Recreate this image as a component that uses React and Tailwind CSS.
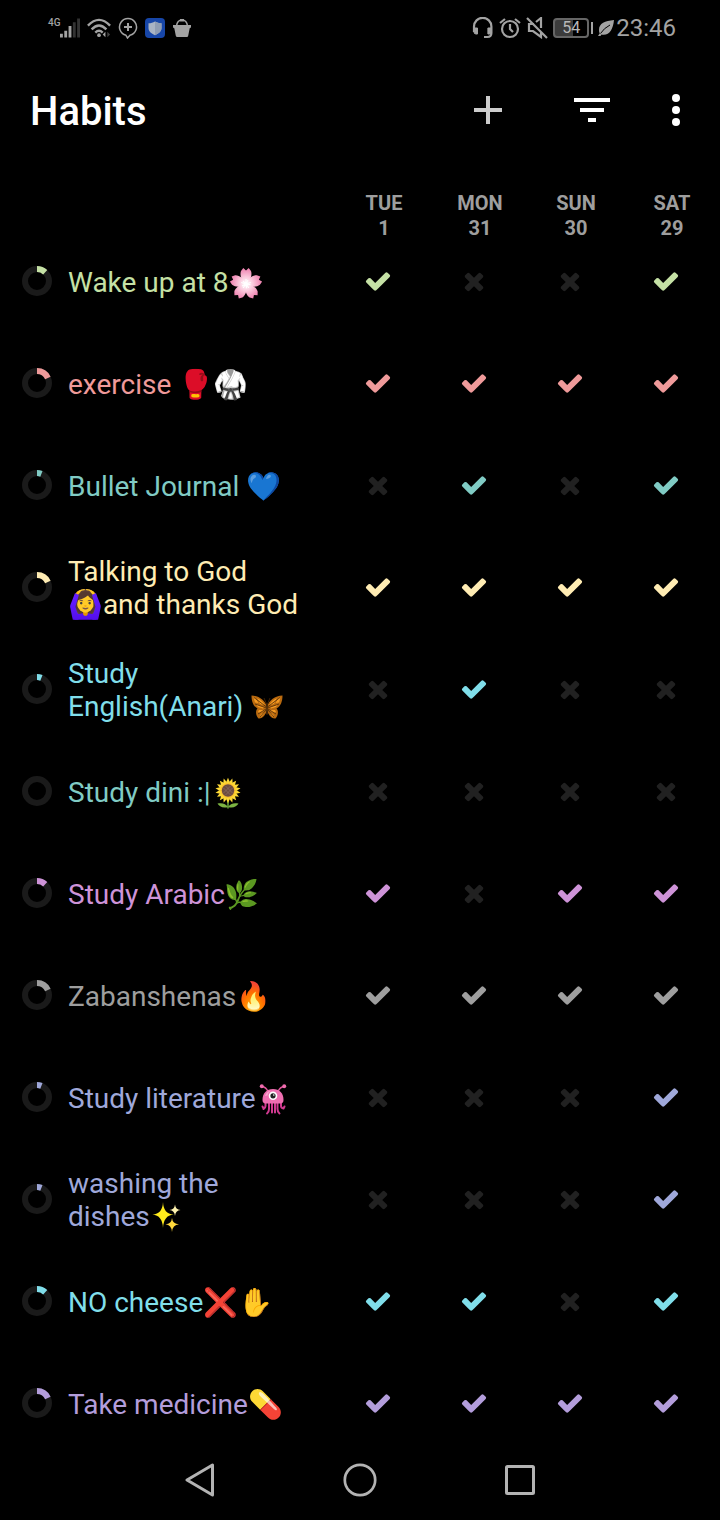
import { Fragment } from "react";

const DAYS = [
  { name: "TUE", date: "1" },
  { name: "MON", date: "31" },
  { name: "SUN", date: "30" },
  { name: "SAT", date: "29" },
];

const HABITS = [
  { parts: ["Wake up at 8", "🌸"], color: "text-[#c5e1a5]", score: 12, marks: [1, 0, 0, 1] },
  { parts: ["exercise ", "🥊🥋"], color: "text-[#ef9a9a]", score: 18, marks: [1, 1, 1, 1] },
  { parts: ["Bullet Journal ", "💙"], color: "text-[#80cbc4]", score: 6, marks: [0, 1, 0, 1] },
  { parts: ["Talking to God ", "🙆‍♀️", "and thanks God"], color: "text-[#ffecb3]", score: 18, marks: [1, 1, 1, 1] },
  { parts: ["Study English(Anari) ", "🦋"], color: "text-[#80deea]", score: 6, marks: [0, 1, 0, 0] },
  { parts: ["Study dini :|", "🌻"], color: "text-[#80cbc4]", score: 0, marks: [0, 0, 0, 0] },
  { parts: ["Study Arabic", "🌿"], color: "text-[#ce93d8]", score: 12, marks: [1, 0, 1, 1] },
  { parts: ["Zabanshenas", "🔥"], color: "text-[#9e9e9e]", score: 18, marks: [1, 1, 1, 1] },
  { parts: ["Study literature", "👾"], color: "text-[#9fa8da]", score: 6, marks: [0, 0, 0, 1] },
  { parts: ["washing the dishes", "✨"], color: "text-[#9fa8da]", score: 6, marks: [0, 0, 0, 1] },
  { parts: ["NO cheese", "❌✋"], color: "text-[#80deea]", score: 12, marks: [1, 1, 0, 1] },
  { parts: ["Take medicine", "💊"], color: "text-[#b39ddb]", score: 18, marks: [1, 1, 1, 1] },
];

const FIVE = [0, 72, 144, 216, 288];
const EIGHTEEN = Array.from({ length: 18 }, (_, i) => i * 20);

function Blossom() {
  return (
    <>
      <defs>
        <radialGradient id="petal" gradientUnits="userSpaceOnUse" cx="16" cy="17" r="16">
          <stop offset="0" stopColor="#fff" />
          <stop offset="0.450" stopColor="#fbc8dc" />
          <stop offset="1" stopColor="#ee7fae" />
        </radialGradient>
      </defs>
      {FIVE.map((a) => (
        <path key={a} transform={`rotate(${a} 16 17)`} fill="url(#petal)" d="M16 17C11.500 14 9.500 8 11 4L13.300 1 16 3.500 18.700 1 21 4C22.500 8 20.500 14 16 17z" />
      ))}
      {FIVE.map((a) => (
        <path key={a} transform={`rotate(${a} 16 17)`} stroke="#fff" strokeWidth="1" d="M16 17V12M16 17l2-4" />
      ))}
      <circle cx="16" cy="17" r="2" fill="#fff" />
    </>
  );
}

function Butterfly() {
  const wing = (
    <>
      <path fill="#b8690f" d="M16 16C18 9 24 5 31.500 4.500 31.500 10 30 15 25.500 17.500 28 20 27 25 24.500 27.500 20 28 17 23 16 19z" />
      <path fill="#f59a22" d="M18 14.500C20 10.500 23 8 26 7.200L23 13zM24.500 12l3-5 2-.5-1.500 5zM19 16l5-1.500 3-1.500-2 3-5 1.500zM18 19l6 0 1 2-2 1zM18 21l4 2 1.500 3-2-.5z" />
      <path stroke="#4a2a0a" strokeWidth="0.800" fill="none" d="M16.500 16L29 6.500M16.500 17L28 13M17 18l8 5M17 19l6 7" />
    </>
  );
  return (
    <>
      {wing}
      <g transform="translate(32 0) scale(-1 1)">{wing}</g>
      <path stroke="#4a2a0a" strokeWidth="1.600" strokeLinecap="round" d="M16 13v10" />
      <path stroke="#4a2a0a" strokeWidth="0.800" fill="none" d="M15.500 13L13 7M16.500 13L19 7" />
    </>
  );
}

function Sunflower() {
  return (
    <>
      <path stroke="#558b2f" strokeWidth="1.800" d="M16 22v9.500" />
      <path fill="#7cb342" d="M16 30C11 31.500 7 29.500 5.500 26.500 10 25.500 14 26.500 16 30zM16 30C21 31.500 25 29.500 26.500 26.500 22 25.500 18 26.500 16 30z" />
      {EIGHTEEN.map((a) => (
        <path key={a} transform={`rotate(${a} 16 13.500)`} fill="#fdd835" d="M16 13.500L14.200 5 16 .8 17.800 5z" />
      ))}
      <circle cx="16" cy="13.500" r="7.500" fill="#fbc02d" />
      <circle cx="16" cy="13.500" r="6.200" fill="#6d4c41" />
      <path stroke="#8d6e63" strokeWidth="0.700" d="M11.500 11l7 7M13.500 9l7 7M11.500 16l7-7M13.500 18l7-7" />
    </>
  );
}

function Alien() {
  return (
    <>
      <path stroke="#e0569c" strokeWidth="1.300" fill="none" d="M5 3.500Q9 4 11 8.500M27 3.500Q23 4 21 8.500" />
      <circle cx="4.800" cy="3.300" r="2" fill="#f06cae" />
      <circle cx="27.200" cy="3.300" r="2" fill="#f06cae" />
      <path stroke="#d03a90" strokeWidth="2" strokeLinecap="round" fill="none" d="M8.500 18v5q0 2-2 3M12 19v7q0 3-2 4.500M15 19v10.500M18 19v10.500M20.500 19v7q0 3 2 4.500M24 18v5q0 2 2.500 2.500M6.500 25.500l-1-2M26.500 25.500l1-2" />
      <path fill="#ef6fb1" d="M5.500 17C5.500 10 9.500 6 16 6s10.500 4 10.500 11c0 2-1 3.500-3 3.500h-15c-2 0-3-1.500-3-3.500z" />
      <path fill="#f7a3ce" d="M8 13c1-3 3-5 6-5.500-2 1.500-3 3-3.500 5z" />
      <circle cx="16" cy="12.800" r="4.300" fill="#fff" />
      <circle cx="16" cy="12.800" r="2.600" fill="#222" />
      <circle cx="16.800" cy="12" r="0.800" fill="#fff" />
    </>
  );
}

function Sparkles() {
  return (
    <>
      <path fill="#ffeb1c" d="M12 1Q12.500 13 22.500 13.500 12.500 14.500 12 27 11.500 14.500 1.500 13.500 11.500 13 12 1z" />
      <path fill="#fff3b0" d="M24 3.500Q24.500 8.500 29.500 9 24.500 9.500 24 15 23.500 9.500 18.500 9 23.500 8.500 24 3.500z" />
      <path fill="#ffd83c" d="M21 17Q21.500 22.800 28 23.300 21.500 23.800 21 31 20.500 23.800 14.500 23.300 20.500 22.800 21 17z" />
    </>
  );
}

const DRAWN = { "🌸": Blossom, "🦋": Butterfly, "🌻": Sunflower, "👾": Alien, "✨": Sparkles };

function LabelPart({ text }) {
  const Picture = DRAWN[text];
  if (!Picture) return <Fragment>{text}</Fragment>;
  return (
    <svg viewBox="0 0 32 32" role="img" aria-label={text} className="mx-px inline-block size-8 align-[-7px]" fill="none">
      <Picture />
    </svg>
  );
}

function Check() {
  return (
    <svg viewBox="0 0 1792 1792" className="size-7" fill="currentColor" aria-hidden="true">
      <path d="M1671 566q0 40-28 68l-724 724-136 136q-28 28-68 28t-68-28l-136-136-362-362q-28-28-28-68t28-68l136-136q28-28 68-28t68 28l294 295 656-657q28-28 68-28t68 28l136 136q28 28 28 68z" />
    </svg>
  );
}

function Cross() {
  return (
    <svg viewBox="0 0 1792 1792" className="size-7 text-[#212121]" fill="currentColor" aria-hidden="true">
      <path d="M1490 1322q0 40-28 68l-136 136q-28 28-68 28t-68-28l-294-294-294 294q-28 28-68 28t-68-28l-136-136q-28-28-28-68t28-68l294-294-294-294q-28-28-28-68t28-68l136-136q28-28 68-28t68 28l294 294 294-294q28-28 68-28t68 28l136 136q28 28 28 68t-28 68l-294 294 294 294q28 28 28 68z" />
    </svg>
  );
}

function Ring({ score }) {
  return (
    <svg viewBox="0 0 30 30" className="size-[30px] shrink-0" fill="none" strokeWidth="6" aria-hidden="true">
      <circle cx="15" cy="15" r="12" stroke="#1a1a1a" />
      {score > 0 && (
        <circle cx="15" cy="15" r="12" stroke="currentColor" pathLength="100" strokeDasharray={`${score} 100`} transform="rotate(-90 15 15)" />
      )}
    </svg>
  );
}

function StatusBar() {
  return (
    <div className="flex h-14 items-center justify-between pl-12 pr-11 text-[#a3a3a3]">
      <div className="flex items-center gap-[7px]">
        <div className="flex items-start">
          <span className="w-3 text-[10px] font-medium leading-3">4G</span>
          <svg viewBox="0 0 21 22" className="h-[22px] w-5" fill="currentColor">
            <path d="M0 17h3v4H0zM4.500 14h3v7h-3zM9 9h3v12H9z" />
            <path d="M13.500 5h3v16h-3zM18 1h3v20h-3z" fill="#333" />
          </svg>
        </div>
        <svg viewBox="0 0 26 22" className="h-[22px] w-6" fill="none" stroke="currentColor" strokeWidth="2.600">
          <path d="M1 8.500Q13-4 25 8.500M5 12.500q8-8.400 16 0M9 16q4-4 8 0" />
          <circle cx="13" cy="18.800" r="2" fill="currentColor" stroke="none" />
          <path d="M20 15v6l-3-3z" fill="currentColor" stroke="none" />
          <path d="M22 15v6l3-3z" fill="#444" stroke="none" />
        </svg>
        <svg viewBox="0 0 20 22" className="h-[22px] w-5" fill="none" stroke="currentColor" strokeWidth="1.500">
          <path d="M8 18.300A8.500 8.500 0 1 1 12 18.300L9.500 21z" />
          <path d="M10 6v8M6 10h8" strokeWidth="2" />
        </svg>
        <svg viewBox="0 0 20 20" className="size-5">
          <rect width="20" height="20" rx="4" fill="#1746a8" />
          <path d="M10 3.500c2 1.300 4 1.700 6.500 1.800v4.700c0 3.300-2.600 5.600-6.500 7.200-3.900-1.600-6.500-3.900-6.500-7.200V5.300C6 5.200 8 4.800 10 3.500z" fill="#a9b4c4" />
          <path d="M10 3.500c2 1.300 4 1.700 6.500 1.800v4.700c0 3.300-2.600 5.600-6.500 7.200z" fill="#8f9db3" />
        </svg>
        <svg viewBox="0 0 20 20" className="size-5" fill="none">
          <path d="M4.500 8C5 4 7.500 2 10 2s5 2 5.500 6" stroke="currentColor" strokeWidth="1.500" />
          <path d="M8 1h4v2.500H8z" fill="currentColor" />
          <path d="M1 7h18v1.500c0 1-.5 1.500-1.300 1.700l-1.500 7.600c-.2.800-.7 1.200-1.500 1.200H5.300c-.8 0-1.300-.4-1.500-1.200l-1.500-7.600C1.500 10 1 9.500 1 8.500z" fill="currentColor" />
        </svg>
      </div>
      <div className="flex items-center gap-[5px]">
        <svg viewBox="0 0 22 22" className="size-[22px]" fill="none" stroke="currentColor" strokeWidth="2.200">
          <path d="M2 15V9.500a8.700 8.700 0 0 1 17.400 0V16q0 4-4 4H12" />
          <path d="M2 11h3.500v6H4a2 2 0 0 1-2-2zM19.400 11h-3.500v6h1.500a2 2 0 0 0 2-2z" fill="currentColor" strokeWidth="1" />
        </svg>
        <svg viewBox="0 0 22 22" className="size-[22px]" fill="none" stroke="currentColor" strokeWidth="2.200">
          <circle cx="11" cy="12" r="8" />
          <path d="M11 7v5l3 3M1 6l5-4M21 6l-5-4" />
        </svg>
        <svg viewBox="0 0 22 22" className="size-[22px]" fill="none" stroke="currentColor" strokeWidth="2.200">
          <path d="M8 7H3v7h4l8 6v-5M10 5l5-4v10M1 1l20 20" />
        </svg>
        <div className="flex items-center gap-0.5">
          <div className="flex h-5 w-9 items-center justify-center rounded-sm border-2 border-[#666] bg-linear-to-r from-[#3c3c3c] from-55% to-black to-55% text-base text-[#b8b8b8]">54</div>
          <div className="h-3 w-0.5 bg-[#a3a3a3]" />
        </div>
        <div className="flex items-center gap-0.5">
          <svg viewBox="0 0 16 16" className="size-4">
            <path d="M16 0C7 1 1 3 1 10c0 1.500.3 2.500.8 3.300L0 16h2.500l1-1.500C11 16 15 10 16 0z" fill="currentColor" />
            <path d="M2.500 13.500Q6 8 12 5" stroke="#000" fill="none" />
          </svg>
          <time className="text-2xl leading-7">23:46</time>
        </div>
      </div>
    </div>
  );
}

function Toolbar() {
  return (
    <header className="flex h-[108px] items-center pl-[30px] pr-3">
      <h1 className="grow pt-1 text-[40px] font-medium leading-[48px] text-white">Habits</h1>
      <button type="button" aria-label="Add habit" className="flex h-14 w-[104px] items-center justify-center">
        <svg viewBox="0 0 28 28" className="size-7" stroke="#ccc" strokeWidth="4"><path d="M14 0v28M0 14h28" /></svg>
      </button>
      <button type="button" aria-label="Filter" className="flex h-14 w-[104px] items-center justify-center">
        <svg viewBox="0 0 36 24" className="h-6 w-9" fill="#fff"><path d="M0 0h36v4H0zM6 10h24v4H6zM14 20h8v4h-8z" /></svg>
      </button>
      <button type="button" aria-label="More options" className="flex h-14 w-16 items-center justify-center">
        <svg viewBox="0 0 8 32" className="h-8 w-2" fill="#fff">
          <circle cx="4" cy="4" r="4" /><circle cx="4" cy="16" r="4" /><circle cx="4" cy="28" r="4" />
        </svg>
      </button>
    </header>
  );
}

function HabitRow({ habit }) {
  return (
    <tr className={`group ${habit.color}`}>
      <th scope="row" className="pt-[7px] pb-[29px] text-left font-normal group-last:pb-0">
        <div className="flex h-[66px] items-center gap-4 pl-[22px] pr-[30px]">
          <Ring score={habit.score} />
          <span className="min-w-0 pt-0.5 text-[28px] leading-[33px]">
            {habit.parts.map((p) => (
              <LabelPart key={p} text={p} />
            ))}
          </span>
        </div>
      </th>
      {habit.marks.map((done, i) => (
        <td key={DAYS[i].name} className="pt-[7px] pb-[29px] group-last:pb-0">
          <button type="button" aria-label={`${DAYS[i].name} ${DAYS[i].date}: ${done ? "done" : "not done"}`} className="flex h-[66px] w-full items-center justify-center">
            {done ? <Check /> : <Cross />}
          </button>
        </td>
      ))}
    </tr>
  );
}

export default function App() {
  return (
    <div className="flex min-h-screen flex-col bg-black font-['Roboto','Noto_Color_Emoji',sans-serif]">
      <StatusBar />
      <Toolbar />
      <main className="grow pr-1.5 pt-[27px]">
        <table className="w-full table-fixed border-collapse">
          <thead>
            <tr className="text-xl leading-[25px] text-[#9e9e9e]">
              <td />
              {DAYS.map((d) => (
                <th key={d.name} scope="col" className="w-24 pl-3 text-center font-bold">
                  {d.name}
                  <br />
                  {d.date}
                </th>
              ))}
            </tr>
          </thead>
          <tbody>
            {HABITS.map((h) => (
              <HabitRow key={h.parts[0]} habit={h} />
            ))}
          </tbody>
        </table>
      </main>
      <nav className="flex h-20 items-center justify-center text-[#b3b3b3]">
        <button type="button" aria-label="Back" className="flex h-14 w-40 items-center justify-center">
          <svg viewBox="0 0 34 34" className="size-[34px]" fill="none" stroke="currentColor" strokeWidth="3" strokeLinejoin="round"><path d="M4 17L29.500 2v30z" /></svg>
        </button>
        <button type="button" aria-label="Home" className="flex h-14 w-40 items-center justify-center">
          <svg viewBox="0 0 34 34" className="size-[34px]" fill="none" stroke="currentColor" strokeWidth="2.700"><circle cx="17" cy="17" r="15.200" /></svg>
        </button>
        <button type="button" aria-label="Recent apps" className="flex h-14 w-40 items-center justify-center">
          <svg viewBox="0 0 34 34" className="size-[34px]" fill="none" stroke="currentColor" strokeWidth="3"><rect x="3.500" y="3.500" width="27" height="27" rx="1" /></svg>
        </button>
      </nav>
    </div>
  );
}
